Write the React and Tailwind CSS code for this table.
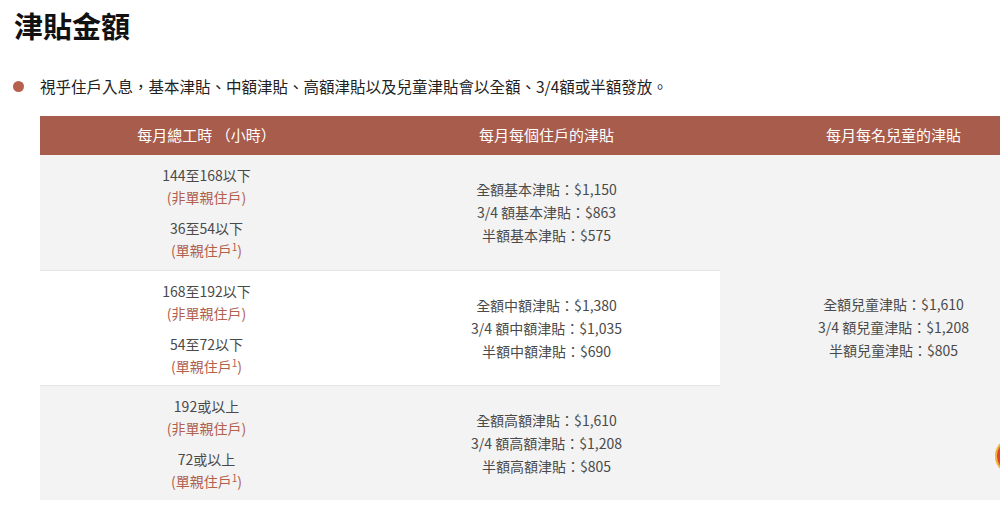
import React from 'react';

const font = { fontFamily: '"Noto Sans CJK TC", "Noto Sans", sans-serif' };

const rows = [
  {
    bg: 'bg-[#f3f3f3]',
    hours: [
      ['144至168以下', '(非單親住戶)', false],
      ['36至54以下', '(單親住戶', true],
    ],
    amounts: ['全額基本津貼：$1,150', '3/4 額基本津貼：$863', '半額基本津貼：$575'],
  },
  {
    bg: 'bg-white',
    hours: [
      ['168至192以下', '(非單親住戶)', false],
      ['54至72以下', '(單親住戶', true],
    ],
    amounts: ['全額中額津貼：$1,380', '3/4 額中額津貼：$1,035', '半額中額津貼：$690'],
  },
  {
    bg: 'bg-[#f3f3f3]',
    hours: [
      ['192或以上', '(非單親住戶)', false],
      ['72或以上', '(單親住戶', true],
    ],
    amounts: ['全額高額津貼：$1,610', '3/4 額高額津貼：$1,208', '半額高額津貼：$805'],
  },
];

function HoursCell({ items }) {
  return (
    <div className="flex flex-col gap-[9px]">
      {items.map(([h, note, sup], i) => (
        <div key={i} className="leading-[22px]">
          <div className="text-[#4a4a4a]">{h}</div>
          <div className="text-[#b0604d]">
            {note}
            {sup && (
              <>
                <span className="relative -top-[5px] text-[10px] leading-none">1</span>)
              </>
            )}
          </div>
        </div>
      ))}
    </div>
  );
}

export default function App() {
  return (
    <div className="relative h-[524px] w-[1000px] overflow-hidden bg-white" style={font}>
      <h1 className="pl-[14px] pt-[5px] text-[29px] font-bold leading-[40px] text-[#111]">津貼金額</h1>

      <div className="mt-[30px] flex items-center pl-[13px]">
        <span className="h-[11px] w-[11px] rounded-full bg-[#b5614e]" />
        <p className="ml-[16px] text-[15.5px] leading-[22px] text-[#222]">
          視乎住戶入息，基本津貼、中額津貼、高額津貼以及兒童津貼會以全額、3/4額或半額發放。
        </p>
      </div>

      <div className="ml-[40px] mt-[19px] w-[1027px] text-[14px]">
        <div className="grid h-[39px] grid-cols-[333px_347px_347px] items-center bg-[#a85c4b] text-[15px] text-white">
          <div className="text-center">每月總工時 （小時）</div>
          <div className="text-center">每月每個住戶的津貼</div>
          <div className="text-center">每月每名兒童的津貼</div>
        </div>

        <div className="grid grid-cols-[680px_347px]">
          <div className="flex flex-col">
            {rows.map((r, i) => (
              <div
                key={i}
                className={`grid h-[115px] grid-cols-[333px_347px] ${r.bg} ${i > 0 ? 'border-t border-[#e6e6e6]' : ''}`}
              >
                <div className="flex items-center justify-center text-center">
                  <HoursCell items={r.hours} />
                </div>
                <div className="flex flex-col items-center justify-center text-center leading-[23px] text-[#4a4a4a]">
                  {r.amounts.map((a) => (
                    <div key={a}>{a}</div>
                  ))}
                </div>
              </div>
            ))}
          </div>
          <div className="flex flex-col items-center justify-center bg-[#f3f3f3] text-center leading-[23px] text-[#4a4a4a]">
            <div>全額兒童津貼：$1,610</div>
            <div>3/4 額兒童津貼：$1,208</div>
            <div>半額兒童津貼：$805</div>
          </div>
        </div>
      </div>

      <div className="absolute left-[995px] top-[437px] h-[38px] w-[38px] rounded-full border-2 border-[#f0b23a] bg-[#e0452b]" />
    </div>
  );
}
